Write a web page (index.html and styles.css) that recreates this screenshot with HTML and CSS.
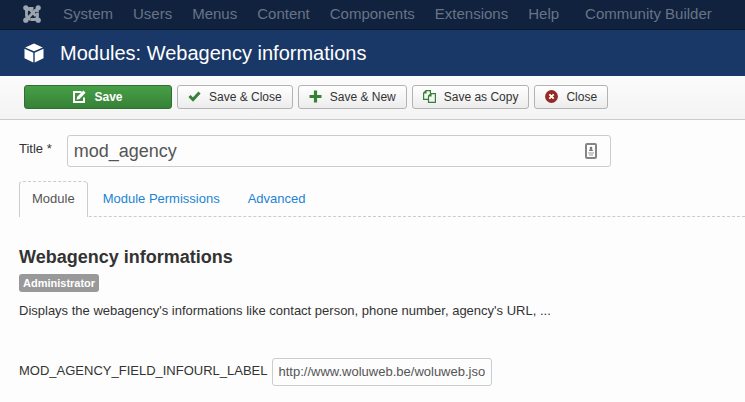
FILE: index.html
```html
<!DOCTYPE html>
<html lang="en">
<head>
<meta charset="utf-8">
<meta name="viewport" content="width=device-width, initial-scale=1">
<title>Modules: Webagency informations</title>
<link rel="stylesheet" href="styles.css">
</head>
<body>
<nav class="navbar">
  <a class="brand" href="#" aria-label="Control panel">
    <svg width="18" height="18" viewBox="0 0 18 18" fill="none" stroke="currentColor">
      <g stroke-width="2.800">
        <path d="M3.500 10.500V6.500Q3.500 3 7 4.500L13 11"/>
        <path d="M7.500 14.500H11.500Q14.500 14.500 14.500 11V7.500"/>
        <path d="M5 13L11.500 6Q14.500 3 14.500 7"/>
        <path d="M10.500 3.500H7Q3.500 3.500 3.500 7"/>
        <path d="M3.500 10Q3.500 14.500 7.500 14"/>
      </g>
      <g fill="currentColor" stroke="none"><circle cx="2.800" cy="2.800" r="2.600"/><circle cx="15.200" cy="2.800" r="2.600"/><circle cx="2.800" cy="15.200" r="2.600"/><circle cx="15.200" cy="15.200" r="2.600"/></g>
    </svg>
  </a>
  <ul class="menu">
    <li><a href="#">System</a></li>
    <li><a href="#">Users</a></li>
    <li><a href="#">Menus</a></li>
    <li><a href="#">Content</a></li>
    <li><a href="#">Components</a></li>
    <li><a href="#">Extensions</a></li>
    <li><a href="#">Help</a></li>
  </ul>
  <ul class="menu">
    <li><a href="#">Community Builder</a></li>
  </ul>
</nav>
<header class="header">
  <svg width="20" height="20" viewBox="0 0 20 20" fill="#fff">
    <path d="M10 0.500L18.800 4.400L10 8.300L1.200 4.400Z"/>
    <path d="M0.500 5.800L9.300 9.700V19.500L0.500 15.200Z"/>
    <path d="M19.500 5.800L10.700 9.700V19.500L19.500 15.200Z"/>
  </svg>
  <h1>Modules: Webagency informations</h1>
</header>
<div class="toolbar">
  <button class="btn btn-save" type="button">
    <svg width="13" height="13" viewBox="0 0 13 13" fill="none" stroke="#fff"><path d="M8.500 2H1V12H11V7.500" stroke-width="2"/><path d="M3.500 9.700L4.200 6.700L10.400 0.500L12.600 2.700L6.500 9Z" fill="#fff" stroke="none"/></svg>
    Save
  </button>
  <button class="btn" type="button">
    <svg width="13" height="13" viewBox="0 0 13 13"><path d="M1.500 6L5 9.500L11.500 2.500" fill="none" stroke="#378137" stroke-width="3"/></svg>
    Save &amp; Close
  </button>
  <button class="btn" type="button">
    <svg width="13" height="13" viewBox="0 0 13 13"><path d="M6.500 0.500V12.500M0.500 6.500H12.500" stroke="#378137" stroke-width="3.200"/></svg>
    Save &amp; New
  </button>
  <button class="btn" type="button">
    <svg width="13" height="13" viewBox="0 0 13 13" fill="none" stroke="#378137" stroke-width="1.200"><path d="M5 9.400H0.600V3L3 0.600H7.400V3.500M3 0.600V3H0.600"/><path d="M5.500 6L8 3.600H12.400V12.400H5.500ZM8 3.600V6H5.500"/></svg>
    Save as Copy
  </button>
  <button class="btn" type="button">
    <svg width="13" height="13" viewBox="0 0 13 13"><circle cx="6.500" cy="6.500" r="6.400" fill="#942a25"/><path d="M4.300 4.300L8.700 8.700M8.700 4.300L4.300 8.700" stroke="#fff" stroke-width="1.800"/></svg>
    Close
  </button>
</div>
<main class="content">
  <div class="title-row">
    <label for="title">Title <small>*</small></label>
    <div class="title-field">
      <input id="title" type="text" value="mod_agency">
      <svg class="autofill" width="12" height="16" viewBox="0 0 12 16"><rect x="1" y="1" width="10" height="14" rx="1" fill="#fff" stroke="#858585" stroke-width="2"/><circle cx="6" cy="5" r="1.300" fill="#777"/><path d="M4 8Q4 6 6 6T8 8Z" fill="#777"/><path d="M3 10H9M4 12H8" stroke="#999"/></svg>
    </div>
  </div>
  <div class="tabs" role="tablist">
    <a class="tab active" role="tab" aria-selected="true" href="#module">Module</a>
    <a class="tab" role="tab" aria-selected="false" href="#permissions">Module Permissions</a>
    <a class="tab" role="tab" aria-selected="false" href="#advanced">Advanced</a>
  </div>
  <section id="module">
    <h2>Webagency informations</h2>
    <span class="badge">Administrator</span>
    <p>Displays the webagency's informations like contact person, phone number, agency's URL, ...</p>
    <div class="field-row">
      <label for="infourl">MOD_AGENCY_FIELD_INFOURL_LABEL</label>
      <input id="infourl" type="text" value="http://www.woluweb.be/woluweb.json">
    </div>
  </section>
</main>
</body>
</html>
```
FILE: styles.css
```css
* {
  box-sizing: border-box;
}

body {
  margin: 0;
  background: #fdfdfd;
  color: #333;
  font: 13px/18px "Liberation Sans", Arial, sans-serif;
}

svg {
  display: block;
  flex: none;
}

a {
  color: #2384d3;
  text-decoration: none;
}

.navbar {
  display: flex;
  align-items: center;
  gap: 6px;
  height: 30px;
  padding: 0 22px 2px;
  background: #10223e;
  border-bottom: 1px solid #0b182b;
  font-size: 15px;
  white-space: nowrap;
}

.brand,
.menu a {
  color: #687486;
}

.brand {
  color: #9da5b0;
  padding-left: 1px;
  margin-right: 6px;
}

.menu {
  display: flex;
  margin: 0;
  padding: 0;
  list-style: none;
}

.menu a {
  padding: 0 10px;
}

.header {
  display: flex;
  align-items: center;
  gap: 16px;
  min-height: 46px;
  padding: 0 24px;
  background: #1a3867;
}

.header h1 {
  margin: 0;
  color: #fff;
  font-size: 20px;
  font-weight: 400;
  line-height: 28px;
}

.toolbar {
  display: flex;
  flex-wrap: wrap;
  gap: 5px;
  padding: 9px 24px 10px;
  background: linear-gradient(#fbfbfb, #f4f4f4);
  border-bottom: 1px solid #ccc;
}

.btn {
  display: flex;
  align-items: center;
  justify-content: center;
  gap: 8px;
  height: 24px;
  padding: 0 10px;
  border: 1px solid #b3b3b3;
  border-radius: 3px;
  background: linear-gradient(#fff, #ececec);
  color: #333;
  font: 12px/18px "Liberation Sans", Arial, sans-serif;
}

.btn svg {
  margin-bottom: 2px;
}

.btn-save {
  width: 148px;
  border-color: #2f6f2f;
  background: linear-gradient(#46a046, #378137);
  color: #fff;
  font-weight: 700;
}

.content {
  padding: 15px 0 16px 19px;
}

.title-row {
  display: flex;
  gap: 15px;
}

.title-row label {
  padding-top: 5px;
}

.title-row small {
  font-size: 13px;
}

.title-field {
  position: relative;
  flex: 0 1 544px;
}

input {
  border: 1px solid #ccc;
  border-radius: 3px;
  background: #fdfdfd;
  color: #555;
  font: 13px/18px "Liberation Sans", Arial, sans-serif;
}

.title-field input {
  display: block;
  width: 100%;
  height: 32px;
  padding: 0 6px;
  font-size: 18px;
}

.autofill {
  position: absolute;
  top: 8px;
  right: 14px;
}

.tabs {
  display: flex;
  margin-top: 14px;
  border-bottom: 1px dashed #ccc;
}

.tab {
  height: 35px;
  padding: 8px 12px;
  border: 1px solid transparent;
  border-bottom: 0;
  margin-right: 2px;
}

.tab.active {
  height: 36px;
  margin-bottom: -1px;
  border-color: #ccc;
  border-top-style: dashed;
  border-radius: 4px 4px 0 0;
  background: #fdfdfd;
  color: #555;
}

h2 {
  margin: 30px 0 7px;
  font-size: 18px;
  line-height: 20px;
}

.badge {
  display: block;
  width: fit-content;
  padding: 2px 4px;
  border-radius: 3px;
  background: #999;
  color: #fff;
  font-size: 11px;
  font-weight: 700;
  line-height: 14px;
}

p {
  margin: 10px 0 38px;
}

.field-row {
  display: flex;
  gap: 4px;
}

.field-row label {
  padding-top: 4px;
}

.field-row input {
  width: 220px;
  height: 28px;
  padding: 0 6px 2px;
}
```
